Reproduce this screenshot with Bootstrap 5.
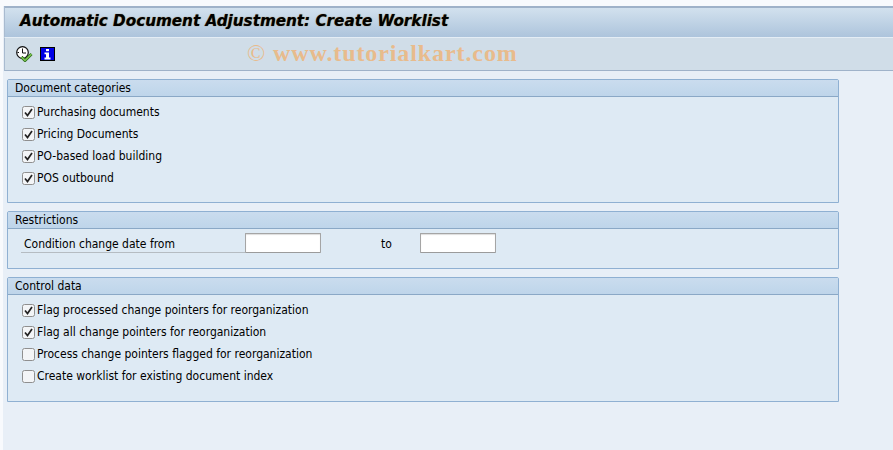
<!DOCTYPE html>
<html lang="en">
<head>
<meta charset="utf-8">
<title>Automatic Document Adjustment: Create Worklist</title>
<link rel="stylesheet" href="https://cdn.jsdelivr.net/npm/bootstrap@5.3.0/dist/css/bootstrap.min.css">
<style>
html,body{height:100%;}
body{background:#f8fafd;font-family:"DejaVu Sans Condensed","DejaVu Sans",sans-serif;font-stretch:condensed;font-size:12px;color:#000;overflow:hidden;}
.sap-shell{height:450px;padding:6px 0 0 3px;}
.sap-frame{height:100%;background:#e8eff7;}
.sap-title{height:31px;margin-left:1px;border-top:2px solid #9fb2c9;border-left:1px solid #a9bbd0;background:linear-gradient(#d2e1ee,#adc4dc);padding-left:15px;font:italic bold 15.2px/26px "DejaVu Sans",sans-serif;white-space:nowrap;text-shadow:0 0 1px #7a5a20;}
.sap-tools{height:34px;margin-left:1px;border-top:1px solid #e4edf5;border-bottom:1px solid #9fb2c9;border-left:1px solid #a9bbd0;background:#d0dde8;padding-left:11px;gap:7px;position:relative;}
.sap-mark{position:absolute;left:242px;top:1px;font:bold 24px/28px "Liberation Serif",serif;color:#e8bb8c;white-space:nowrap;letter-spacing:.9px;}
.sap-mark span{font-weight:400;}
.sap-body{padding:8px 54px 0 4px;}
.sap-group{background:#deeaf4;border:1px solid #8fb0d2;border-radius:2px 2px 0 0;margin-bottom:8px;height:125px;}
.sap-group-first{height:124px;}
.sap-group-short{height:58px;}
.sap-group-head{height:17px;background:linear-gradient(#cadcee,#bed5ea);border-bottom:1px solid #8aa8c6;padding-left:7px;line-height:17px;}
.sap-rows{padding:4px 0 0 14px;}
.sap-row{height:22px;align-items:center;white-space:nowrap;}
.sap-check{width:13px;height:13px;margin-right:2px;flex:none;display:block;}
.sap-date{padding:4px 0 0 13px;}
.sap-label{width:224px;height:20px;padding-left:3px;border-bottom:1px solid #b5bcc2;line-height:22px;}
.sap-input{width:76px;height:20px;background:#fff;border:1px solid #a5a5a5;border-bottom-color:#9b9b9b;box-shadow:inset 0 1px 1px #ddd;border-radius:1px;}
.sap-to{width:99px;padding-left:60px;line-height:22px;}
</style>
</head>
<body>
<div class="sap-shell">
<div class="sap-frame d-flex flex-column">
<div class="sap-title">Automatic Document Adjustment: Create Worklist</div>
<div class="sap-tools d-flex align-items-center">
<svg width="17" height="16" viewBox="0 0 17 16"><circle cx="6.5" cy="6.5" r="5.8" fill="#fff" stroke="#111" stroke-width="1.2"/><path d="M6.5 2.5V7H10M1.5 6.5H3M6.5 10V11.5" fill="none" stroke="#111" stroke-width="1"/><path d="M5.5 11l3.5 3.5 6.5-6.5" fill="none" stroke="#2f6a1c" stroke-width="3"/><path d="M5.5 11l3.5 3.5 6.5-6.5" fill="none" stroke="#7cc750" stroke-width="1.5"/></svg>
<svg width="15" height="14" viewBox="0 0 15 14"><rect width="15" height="14" fill="#000"/><rect x="1" y="1" width="13" height="12" fill="#0000e6"/><rect x="6" y="2" width="3" height="2.2" fill="#fff"/><path d="M4.5 5.5H9V10.5H10.5V12.5H4.5V10.5H6V7.3H4.5Z" fill="#fff"/></svg>
<div class="sap-mark"><span>©</span> www.tutorialkart.com</div>
</div>
<div class="sap-body">
<section class="sap-group sap-group-first">
<div class="sap-group-head">Document categories</div>
<div class="sap-rows">
<div class="sap-row d-flex"><svg class="sap-check" viewBox="0 0 13 13"><rect x=".5" y=".5" width="12" height="12" rx="2" fill="#f3f5f7" stroke="#8f8f8f"/><path d="M3 6.5l2.5 3L10 3" fill="none" stroke="#222" stroke-width="1.7"/></svg>Purchasing documents</div>
<div class="sap-row d-flex"><svg class="sap-check" viewBox="0 0 13 13"><rect x=".5" y=".5" width="12" height="12" rx="2" fill="#f3f5f7" stroke="#8f8f8f"/><path d="M3 6.5l2.5 3L10 3" fill="none" stroke="#222" stroke-width="1.7"/></svg>Pricing Documents</div>
<div class="sap-row d-flex"><svg class="sap-check" viewBox="0 0 13 13"><rect x=".5" y=".5" width="12" height="12" rx="2" fill="#f3f5f7" stroke="#8f8f8f"/><path d="M3 6.5l2.5 3L10 3" fill="none" stroke="#222" stroke-width="1.7"/></svg>PO-based load building</div>
<div class="sap-row d-flex"><svg class="sap-check" viewBox="0 0 13 13"><rect x=".5" y=".5" width="12" height="12" rx="2" fill="#f3f5f7" stroke="#8f8f8f"/><path d="M3 6.5l2.5 3L10 3" fill="none" stroke="#222" stroke-width="1.7"/></svg>POS outbound</div>
</div>
</section>
<section class="sap-group sap-group-short">
<div class="sap-group-head">Restrictions</div>
<div class="sap-date d-flex">
<div class="sap-label">Condition change date from</div>
<div class="sap-input"></div>
<div class="sap-to">to</div>
<div class="sap-input"></div>
</div>
</section>
<section class="sap-group">
<div class="sap-group-head">Control data</div>
<div class="sap-rows">
<div class="sap-row d-flex"><svg class="sap-check" viewBox="0 0 13 13"><rect x=".5" y=".5" width="12" height="12" rx="2" fill="#f3f5f7" stroke="#8f8f8f"/><path d="M3 6.5l2.5 3L10 3" fill="none" stroke="#222" stroke-width="1.7"/></svg>Flag processed change pointers for reorganization</div>
<div class="sap-row d-flex"><svg class="sap-check" viewBox="0 0 13 13"><rect x=".5" y=".5" width="12" height="12" rx="2" fill="#f3f5f7" stroke="#8f8f8f"/><path d="M3 6.5l2.5 3L10 3" fill="none" stroke="#222" stroke-width="1.7"/></svg>Flag all change pointers for reorganization</div>
<div class="sap-row d-flex"><svg class="sap-check" viewBox="0 0 13 13"><rect x=".5" y=".5" width="12" height="12" rx="2" fill="#f3f5f7" stroke="#8f8f8f"/></svg>Process change pointers flagged for reorganization</div>
<div class="sap-row d-flex"><svg class="sap-check" viewBox="0 0 13 13"><rect x=".5" y=".5" width="12" height="12" rx="2" fill="#f3f5f7" stroke="#8f8f8f"/></svg>Create worklist for existing document index</div>
</div>
</section>
</div>
</div>
</div>
<script src="https://cdn.jsdelivr.net/npm/bootstrap@5.3.0/dist/js/bootstrap.bundle.min.js"></script>
</body>
</html>
